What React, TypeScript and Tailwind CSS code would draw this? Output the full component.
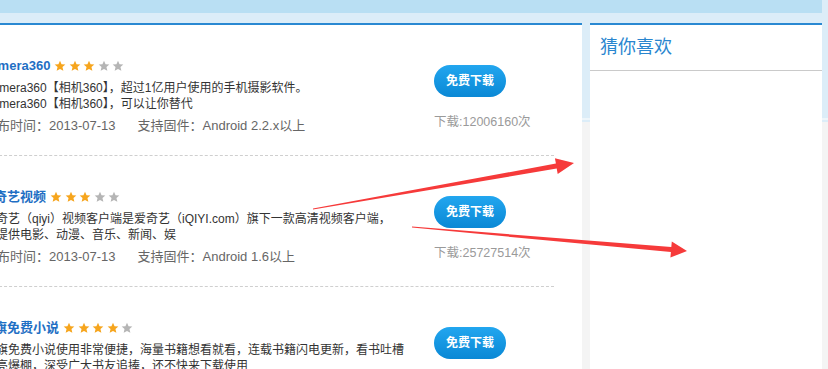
import React from 'react'

type App_ = {
  title: string
  stars: number
  lines: string[]
  date: string
  firmware: string
  downloads: string
}

const apps: App_[] = [
  {
    title: 'Camera360',
    stars: 3,
    lines: ['Camera360【相机360】，超过1亿用户使用的手机摄影软件。', 'Camera360【相机360】，可以让你替代'],
    date: '2013-07-13',
    firmware: 'Android 2.2.x以上',
    downloads: '12006160',
  },
  {
    title: '爱奇艺视频',
    stars: 3,
    lines: ['爱奇艺（qiyi）视频客户端是爱奇艺（iQIYI.com）旗下一款高清视频客户端，', '可提供电影、动漫、音乐、新闻、娱'],
    date: '2013-07-13',
    firmware: 'Android 1.6以上',
    downloads: '25727514',
  },
  {
    title: '书旗免费小说',
    stars: 4,
    lines: ['书旗免费小说使用非常便捷，海量书籍想看就看，连载书籍闪电更新，看书吐槽', '点亮爆棚，深受广大书友追捧，还不快来下载使用'],
    date: '2013-07-13',
    firmware: 'Android 2.1以上',
    downloads: '9873210',
  },
]

const Star = ({ on }: { on: boolean }) => (
  <svg width="12" height="12" viewBox="0 0 24 24">
    <path
      d="M12 1.5l3.1 7 7.6.7-5.8 5 1.8 7.5L12 17.8l-6.7 3.9 1.8-7.5-5.8-5 7.6-.7z"
      fill={on ? '#f6a51d' : '#b5b5b5'}
    />
  </svg>
)

const Arrows = () => (
  <svg
    className="absolute inset-0 pointer-events-none"
    width="828"
    height="369"
    viewBox="0 0 828 369"
  >
    <polygon
      points="313,208.6 555.9,163.6 554.9,158.2 574,163 557.7,174 556.7,168.6 313,209.6"
      fill="#f63a3a"
    />
    <polygon
      points="412,226.6 671.3,247.1 671.8,241.6 687,251 670.4,257.6 670.9,252.1 412,227.6"
      fill="#f63a3a"
    />
  </svg>
)

export default function App() {
  return (
    <div
      className="relative w-[828px] h-[369px] overflow-hidden bg-[linear-gradient(to_bottom,#dcedf8_0,#dcedf8_118px,#eef6fb_118px,#eef6fb_120px,#dcedf8_120px,#dcedf8_122px,#f4f4f4_122px)]"
      style={{ fontFamily: '"Liberation Sans", "Noto Sans CJK SC", sans-serif' }}
    >
      <div className="w-[822px] h-full flex flex-col">
        <div className="h-[13px] bg-[#b9dff3] shrink-0" />
        <div className="mt-[10px] flex gap-[8px] flex-1">
          {/* app list */}
          <div className="w-[582px] bg-white border-t-2 border-[#2a89d2] overflow-hidden">
            <div className="-ml-[16px] w-[570px]">
              {apps.map((a) => (
                <div
                  key={a.title}
                  className="flex h-[131px] pt-[31px] border-b border-dashed border-[#cfcfcf]"
                >
                  <div className="flex-1 whitespace-nowrap">
                    <div className="-ml-[3px] flex items-center gap-[4px] h-[20px]">
                      <span className="text-[13px] font-bold text-[#1f6fc4]">{a.title}</span>
                      <div className="flex gap-[2.5px]">
                        {[0, 1, 2, 3, 4].map((i) => (
                          <Star key={i} on={i < a.stars} />
                        ))}
                      </div>
                    </div>
                    <div className="mt-[4px] text-[12px] leading-[16px] text-[#333]">
                      {a.lines.map((l) => (
                        <div key={l}>{l}</div>
                      ))}
                    </div>
                    <div className="mt-[6px] text-[13px] leading-[16px] text-[#666] flex">
                      <span>发布时间：{a.date}</span>
                      <span className="ml-[22px]">支持固件：{a.firmware}</span>
                    </div>
                  </div>
                  <div className="w-[120px] pt-[9px] flex flex-col items-start">
                    <button className="w-[72px] h-[32px] rounded-full bg-[linear-gradient(to_bottom,#22a6ef,#0a88d5)] text-white text-[12px] font-bold">
                      免费下载
                    </button>
                    <div className="mt-[17px] text-[12.5px] leading-[16px] text-[#9a9a9a] whitespace-nowrap">
                      下载:{a.downloads}次
                    </div>
                  </div>
                </div>
              ))}
            </div>
          </div>

          {/* sidebar */}
          <div className="w-[232px] bg-white border-t-2 border-[#2a89d2]">
            <div className="h-[46px] flex items-center px-[10px] border-b border-[#cacaca]">
              <span className="text-[18px] text-[#2a86cf]">猜你喜欢</span>
            </div>
          </div>
        </div>
      </div>
      <Arrows />
    </div>
  )
}
